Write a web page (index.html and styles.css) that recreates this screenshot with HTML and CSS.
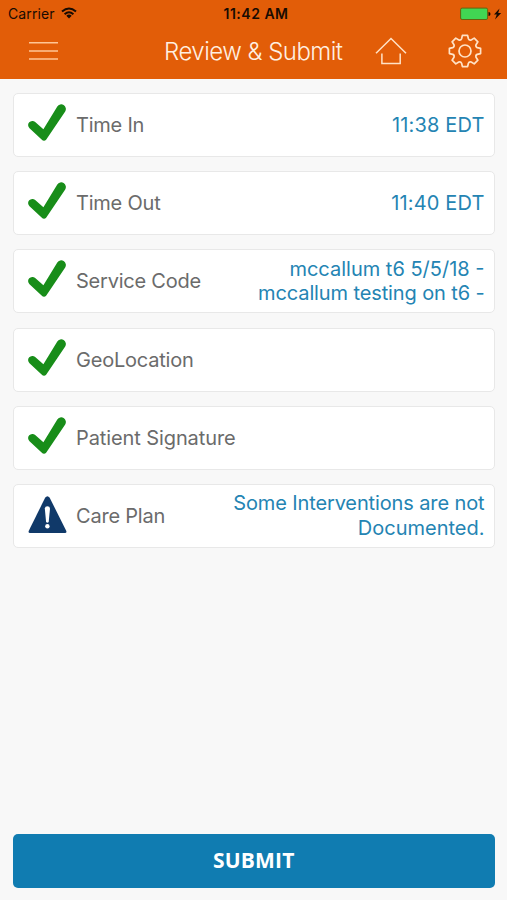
FILE: index.html
```html
<!DOCTYPE html>
<html lang="en">
<head>
<meta charset="utf-8">
<title>Review &amp; Submit</title>
<link rel="stylesheet" href="styles.css">
</head>
<body>
<svg width="0" height="0" class="defs">
  <symbol id="check" viewBox="0 0 40 40"><path d="M1.500 24.300A4.200 4.200 0 0 1 7.200 18L15.400 25.200 29.300 2.600A4.600 4.600 0 0 1 37.200 7.400L18.300 35.500Q16 38 13.600 35.400Z" fill="#188d19"/></symbol>
</svg>
<header class="header">
  <div class="status">
    <div class="carrier"><span>Carrier</span>
      <svg width="16" height="12" viewBox="0 0 16 12" fill="none" stroke="#180b02" stroke-width="2"><path d="M1 4.500Q8-1.500 15 4.500M3.600 7.200Q8 3.300 12.400 7.200"/><path d="M5.300 8.700Q8 6.400 10.700 8.700L8 11.500Z" fill="#180b02" stroke="none"/></svg>
    </div>
    <span class="clock">11:42 AM</span>
    <div class="power">
      <svg width="42" height="14" viewBox="0 0 42 14"><rect x=".6" y="1.100" width="27" height="11.400" rx="1.500" fill="#41d653" stroke="#65630e"/><path d="M28.500 5Q30.500 5 30.500 6.900T28.500 9Z" fill="#180b02"/><path d="M39.500 1.500L34 7.600H36.800L35 12.500 41.200 6H38.200Z" fill="#180b02"/></svg>
    </div>
  </div>
  <nav class="nav">
    <svg class="menu" width="29" height="20" viewBox="0 0 29 20" stroke="#ffc595" stroke-width="1.500"><path d="M0 1.700H29M0 9.900H29M0 18.100H29"/></svg>
    <h1>Review &amp; Submit</h1>
    <svg class="home" width="32" height="28" viewBox="0 0 32 28" fill="none" stroke="#ffe2c6" stroke-width="1.500"><path d="M1 16.200L16 1.500 31 16.200M6.900 16.500V26.500H25.200V16.500"/></svg>
    <svg class="gear" width="34" height="34" viewBox="-17 -17 34 34" fill="none" stroke="#ffe2c6" stroke-width="1.700" stroke-linejoin="round"><path d="M-3.400-12.200L-2.600-15.600H2.600L3.400-12.200Q4.130-10.400 6.200-11L9.200-12.900 12.900-9.200 11-6.200Q10.400-4.130 12.200-3.400L15.600-2.600V2.600L12.200 3.400Q10.400 4.130 11 6.200L12.900 9.200 9.200 12.900 6.200 11Q4.130 10.400 3.400 12.200L2.600 15.600H-2.600L-3.400 12.200Q-4.130 10.400-6.200 11L-9.200 12.900-12.900 9.200-11 6.200Q-10.400 4.130-12.200 3.400L-15.600 2.600V-2.600L-12.200-3.400Q-10.400-4.130-11-6.200L-12.900-9.200-9.200-12.900-6.200-11Q-4.130-10.400-3.400-12.200Z"/><circle r="6"/></svg>
  </nav>
</header>
<main class="list">
  <section class="card"><svg class="icon"><use href="#check"/></svg><span class="label">Time In</span><span class="value time">11:38 EDT</span></section>
  <section class="card"><svg class="icon"><use href="#check"/></svg><span class="label">Time Out</span><span class="value time">11:40 EDT</span></section>
  <section class="card"><svg class="icon"><use href="#check"/></svg><span class="label">Service Code</span><span class="value">mccallum t6 5/5/18 -<br><span class="tight">mccallum testing on t6 -</span></span></section>
  <section class="card"><svg class="icon"><use href="#check"/></svg><span class="label">GeoLocation</span></section>
  <section class="card"><svg class="icon"><use href="#check"/></svg><span class="label signature">Patient Signature</span></section>
  <section class="card"><svg class="icon" viewBox="0 0 40 40"><path d="M17.100 2.800Q19.400-.5 21.700 2.800L38.200 35.800Q39 38 37 38H2Q0 38 .8 35.800Z" fill="#103969"/><path d="M16.800 13.500Q17 11.300 19.400 11.300T22 13.500L20.700 27Q19.400 28.500 18.100 27Z" fill="#fff"/><circle cx="19.400" cy="31.200" r="2.200" fill="#fff"/></svg><span class="label">Care Plan</span><span class="value"><span class="tight">Some Interventions are not</span><br>Documented.</span></section>
</main>
<footer class="footer"><button class="submit">SUBMIT</button></footer>
</body>
</html>
```
FILE: styles.css
```css
* { box-sizing: border-box; }
body {
  margin: 0;
  height: 900px;
  display: flex;
  flex-direction: column;
  background: #f8f8f8;
  font-family: Inter, "Liberation Sans", sans-serif;
  overflow: hidden;
}
.defs { display: none; }
.header {
  height: 79px;
  flex: none;
  background: #e25d08;
}
.status {
  height: 27px;
  padding: 0 5px 0 8px;
  display: grid;
  grid-template-columns: 1fr auto 1fr;
  align-items: center;
  font-size: 14px;
  color: #180b02;
}
.carrier { display: flex; align-items: center; gap: 6px; letter-spacing: 0.1px; }
.carrier svg { margin-top: -2px; }
.clock { font-weight: 600; font-size: 14px; letter-spacing: 0.5px; margin-left: 2px; }
.power { display: flex; justify-content: flex-end; }
.nav {
  height: 48px;
  display: flex;
  align-items: center;
  padding-left: 29px;
}
.nav svg { flex: none; }
.nav h1 {
  width: 179px;
  margin: 0 0 0 106px;
  font-size: 24px;
  font-weight: 300;
  letter-spacing: -0.52px;
  white-space: nowrap;
  color: #fff0e2;
}
.home { margin-left: 32px; }
.gear { margin-left: 41px; }
.list {
  flex: 1;
  padding: 14px 12.5px 0 13px;
  display: flex;
  flex-direction: column;
  gap: 14.2px;
}
.card {
  height: 64px;
  flex: none;
  display: flex;
  align-items: center;
  padding: 0 9px 0 14px;
  background: #fff;
  border: 1px solid #e8e8e8;
  border-radius: 5px;
}
.icon { width: 40px; height: 40px; flex: none; margin-top: -2px; }
.label {
  margin-left: 8px;
  font-size: 20px;
  letter-spacing: -0.22px;
  color: #6b6b6b;
  white-space: nowrap;
}
.signature { letter-spacing: -0.1px; }
.value {
  margin-left: auto;
  font-size: 20px;
  line-height: 24.5px;
  text-align: right;
  white-space: nowrap;
  color: #2484b3;
}
.time { letter-spacing: 0.15px; }
.tight { letter-spacing: -0.12px; }
.footer { padding: 0 12.5px 12px 13px; }
.submit {
  display: block;
  width: 100%;
  height: 54px;
  padding: 0 0 2px;
  border: 0;
  border-radius: 5px;
  background: #107cb1;
  color: #fff;
  font: 700 21px "Open Sans", sans-serif;
  letter-spacing: 0.2px;
}
```
